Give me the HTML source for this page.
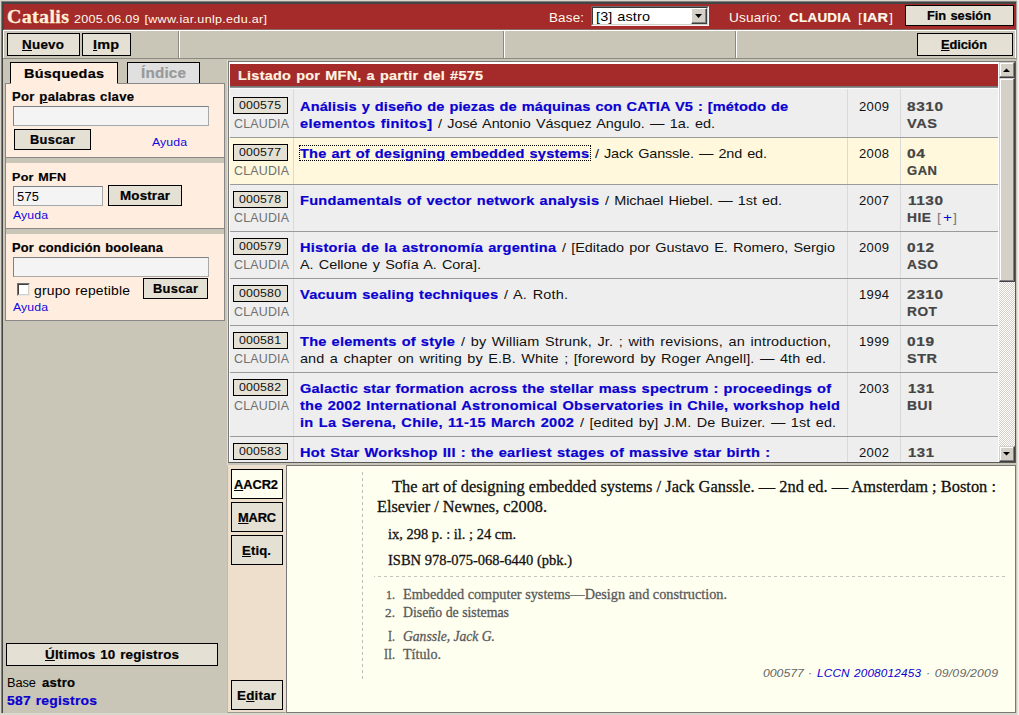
<!DOCTYPE html>
<html lang="es"><head><meta charset="utf-8"><title>Catalis</title>
<style>
html,body{margin:0;padding:0;}
body{width:1019px;height:715px;overflow:hidden;position:relative;background:#C9C6B8;font-family:'Liberation Sans', sans-serif;}
div{position:absolute;}
.t{position:absolute;white-space:pre;transform-origin:0 0;}
u{text-decoration:underline;}
</style></head><body>

<div style="left:0px;top:0px;width:1019px;height:715px;background:#C9C6B8;"></div>
<div style="left:0px;top:0px;width:1019px;height:1px;background:#DAD7CD;"></div>
<div style="left:0px;top:0px;width:1px;height:715px;background:#DAD7CD;"></div>
<div style="left:1px;top:1px;width:1018px;height:1px;background:#808080;"></div>
<div style="left:1px;top:1px;width:1px;height:713px;background:#808080;"></div>
<div style="left:2px;top:2px;width:1017px;height:2px;background:#454545;"></div>
<div style="left:2px;top:2px;width:1px;height:711px;background:#454545;"></div>
<div style="left:3px;top:2px;width:1px;height:28px;background:#454545;"></div>
<div style="left:0px;top:713px;width:1019px;height:2px;background:#DAD7CD;"></div>
<div style="left:1016px;top:1px;width:1px;height:59px;background:#A0A0A0;"></div>
<div style="left:1017px;top:0px;width:1px;height:715px;background:#E6E4DC;"></div>
<div style="left:1018px;top:0px;width:1px;height:715px;background:#F2F1EC;"></div>
<div style="left:4px;top:4px;width:1012px;height:25px;background:#A52A2A;"></div>
<div style="left:4px;top:29px;width:1012px;height:1px;background:#8a6a62;"></div>
<div style="left:591px;top:6px;width:118px;height:20px;background:#fff;border:1px solid;border-color:#6b6b6b #f4f4f4 #f4f4f4 #6b6b6b;box-sizing:border-box;"></div>
<div style="left:592px;top:7px;width:116px;height:18px;border:1px solid;border-color:#3a3a3a #d4d0c8 #d4d0c8 #3a3a3a;box-sizing:border-box;"></div>
<div style="left:691px;top:8px;width:16px;height:16px;background:#D4D0C8;border:1px solid;border-color:#fff #404040 #404040 #fff;box-sizing:border-box;box-shadow:inset -1px -1px 0 #808080;"><svg width="14" height="14" style="position:absolute;left:0;top:0"><path d="M3 5h7l-3.5 4z" fill="#000"/></svg></div>
<div style="left:905px;top:5px;width:109px;height:21px;background:#E4E0D4;border:1px solid #000;box-sizing:border-box;"></div>
<div style="left:3px;top:30px;width:1013px;height:1px;background:#fff;"></div>
<div style="left:4px;top:31px;width:1011px;height:27px;background:#C9C6B8;"></div>
<div style="left:3px;top:30px;width:1px;height:29px;background:#fff;"></div>
<div style="left:1015px;top:30px;width:1px;height:29px;background:#fff;"></div>
<div style="left:3px;top:58px;width:1013px;height:1px;background:#8a8a80;"></div>
<div style="left:178px;top:31px;width:1px;height:27px;background:#8a8a80;"></div>
<div style="left:179px;top:31px;width:1px;height:27px;background:#fff;"></div>
<div style="left:503px;top:31px;width:1px;height:27px;background:#8a8a80;"></div>
<div style="left:504px;top:31px;width:1px;height:27px;background:#fff;"></div>
<div style="left:735px;top:31px;width:1px;height:27px;background:#8a8a80;"></div>
<div style="left:736px;top:31px;width:1px;height:27px;background:#fff;"></div>
<div style="left:7px;top:33px;width:73px;height:23px;background:#E4E0D4;border:1px solid #000;box-sizing:border-box;"></div>
<div style="left:82px;top:33px;width:49px;height:23px;background:#E4E0D4;border:1px solid #000;box-sizing:border-box;"></div>
<div style="left:917px;top:33px;width:96px;height:23px;background:#E4E0D4;border:1px solid #000;box-sizing:border-box;"></div>
<div style="left:10px;top:62px;width:108px;height:22px;background:#FFEEE0;border:1px solid #000;border-bottom:none;box-sizing:border-box;"></div>
<div style="left:127px;top:62px;width:73px;height:22px;background:#E0E0E0;border:1px solid #000;box-sizing:border-box;"></div>
<div style="left:5px;top:83px;width:1px;height:238px;background:#888888;"></div>
<div style="left:224px;top:83px;width:1px;height:238px;background:#888888;"></div>
<div style="left:5px;top:83px;width:220px;height:1px;background:#888888;"></div>
<div style="left:11px;top:83px;width:106px;height:1px;background:#FFEEE0;"></div>
<div style="left:6px;top:84px;width:218px;height:73px;background:#FFEEE0;"></div>
<div style="left:5px;top:157px;width:220px;height:1px;background:#888888;"></div>
<div style="left:6px;top:163px;width:218px;height:65px;background:#FFEEE0;"></div>
<div style="left:5px;top:228px;width:220px;height:1px;background:#888888;"></div>
<div style="left:6px;top:234px;width:218px;height:86px;background:#FFEEE0;"></div>
<div style="left:5px;top:320px;width:220px;height:1px;background:#888888;"></div>
<div style="left:13px;top:106px;width:196px;height:20px;background:#F4F4F4;border:1px solid;border-color:#808080 #a8a8a8 #a8a8a8 #808080;box-sizing:border-box;"></div>
<div style="left:14px;top:129px;width:77px;height:21px;background:#E4E0D4;border:1px solid #000;box-sizing:border-box;"></div>
<div style="left:13px;top:186px;width:90px;height:20px;background:#F4F4F4;border:1px solid;border-color:#808080 #a8a8a8 #a8a8a8 #808080;box-sizing:border-box;"></div>
<div style="left:108px;top:185px;width:74px;height:21px;background:#E4E0D4;border:1px solid #000;box-sizing:border-box;"></div>
<div style="left:13px;top:257px;width:196px;height:20px;background:#F4F4F4;border:1px solid;border-color:#808080 #a8a8a8 #a8a8a8 #808080;box-sizing:border-box;"></div>
<div style="left:17px;top:283px;width:13px;height:13px;background:#fff;border:1px solid;border-color:#707070 #e8e8e8 #e8e8e8 #707070;box-sizing:border-box;"></div>
<div style="left:18px;top:284px;width:11px;height:11px;border:1px solid;border-color:#404040 #d4d0c8 #d4d0c8 #404040;box-sizing:border-box;"></div>
<div style="left:143px;top:278px;width:65px;height:21px;background:#E4E0D4;border:1px solid #000;box-sizing:border-box;"></div>
<div style="left:6px;top:643px;width:212px;height:23px;background:#E4E0D4;border:1px solid #000;box-sizing:border-box;"></div>
<div style="left:227px;top:60px;width:1px;height:653px;background:#E2E0D6;"></div>
<div style="left:228px;top:61px;width:788px;height:402px;background:#fff;border:1px solid;border-color:#787878 #5a5a5a #5a5a5a #787878;box-sizing:border-box;"></div>
<div style="left:230px;top:64px;width:768px;height:398px;background:#EEEEEE;"></div>
<div style="left:230px;top:64px;width:768px;height:22px;background:#A52A2A;"></div>
<div style="left:230px;top:86px;width:768px;height:1px;background:#747878;"></div>
<div style="left:230px;top:87px;width:768px;height:1px;background:#8e9292;"></div>
<div style="left:230px;top:88px;width:768px;height:1px;background:#FCFCFC;"></div>
<div style="left:230px;top:137px;width:768px;height:1px;background:#9a9a9a;"></div>
<div style="left:293px;top:89px;width:1px;height:48px;background:#DADADA;"></div>
<div style="left:847px;top:89px;width:1px;height:48px;background:#DADADA;"></div>
<div style="left:900px;top:89px;width:1px;height:48px;background:#DADADA;"></div>
<div style="left:233px;top:97px;width:55px;height:17px;background:#E4E0D4;border:1px solid #000;box-sizing:border-box;"></div>
<div style="left:230px;top:138px;width:768px;height:46px;background:#FFF8DC;"></div>
<div style="left:230px;top:184px;width:768px;height:1px;background:#9a9a9a;"></div>
<div style="left:293px;top:138px;width:1px;height:46px;background:#DADADA;"></div>
<div style="left:847px;top:138px;width:1px;height:46px;background:#DADADA;"></div>
<div style="left:900px;top:138px;width:1px;height:46px;background:#DADADA;"></div>
<div style="left:233px;top:144px;width:55px;height:17px;background:#E4E0D4;border:1px solid #000;box-sizing:border-box;"></div>
<div style="left:230px;top:231px;width:768px;height:1px;background:#9a9a9a;"></div>
<div style="left:293px;top:185px;width:1px;height:46px;background:#DADADA;"></div>
<div style="left:847px;top:185px;width:1px;height:46px;background:#DADADA;"></div>
<div style="left:900px;top:185px;width:1px;height:46px;background:#DADADA;"></div>
<div style="left:233px;top:191px;width:55px;height:17px;background:#E4E0D4;border:1px solid #000;box-sizing:border-box;"></div>
<div style="left:230px;top:278px;width:768px;height:1px;background:#9a9a9a;"></div>
<div style="left:293px;top:232px;width:1px;height:46px;background:#DADADA;"></div>
<div style="left:847px;top:232px;width:1px;height:46px;background:#DADADA;"></div>
<div style="left:900px;top:232px;width:1px;height:46px;background:#DADADA;"></div>
<div style="left:233px;top:238px;width:55px;height:17px;background:#E4E0D4;border:1px solid #000;box-sizing:border-box;"></div>
<div style="left:230px;top:325px;width:768px;height:1px;background:#9a9a9a;"></div>
<div style="left:293px;top:279px;width:1px;height:46px;background:#DADADA;"></div>
<div style="left:847px;top:279px;width:1px;height:46px;background:#DADADA;"></div>
<div style="left:900px;top:279px;width:1px;height:46px;background:#DADADA;"></div>
<div style="left:233px;top:285px;width:55px;height:17px;background:#E4E0D4;border:1px solid #000;box-sizing:border-box;"></div>
<div style="left:230px;top:372px;width:768px;height:1px;background:#9a9a9a;"></div>
<div style="left:293px;top:326px;width:1px;height:46px;background:#DADADA;"></div>
<div style="left:847px;top:326px;width:1px;height:46px;background:#DADADA;"></div>
<div style="left:900px;top:326px;width:1px;height:46px;background:#DADADA;"></div>
<div style="left:233px;top:332px;width:55px;height:17px;background:#E4E0D4;border:1px solid #000;box-sizing:border-box;"></div>
<div style="left:230px;top:436px;width:768px;height:1px;background:#9a9a9a;"></div>
<div style="left:293px;top:373px;width:1px;height:63px;background:#DADADA;"></div>
<div style="left:847px;top:373px;width:1px;height:63px;background:#DADADA;"></div>
<div style="left:900px;top:373px;width:1px;height:63px;background:#DADADA;"></div>
<div style="left:233px;top:379px;width:55px;height:17px;background:#E4E0D4;border:1px solid #000;box-sizing:border-box;"></div>
<div style="left:293px;top:437px;width:1px;height:25px;background:#DADADA;"></div>
<div style="left:847px;top:437px;width:1px;height:25px;background:#DADADA;"></div>
<div style="left:900px;top:437px;width:1px;height:25px;background:#DADADA;"></div>
<div style="left:233px;top:443px;width:55px;height:17px;background:#E4E0D4;border:1px solid #000;box-sizing:border-box;"></div>
<div style="left:299px;top:145px;width:292px;height:16px;border:1px dotted #000;box-sizing:border-box;"></div>
<div style="left:999px;top:62px;width:16px;height:400px;background:repeating-conic-gradient(#fff 0% 25%,#D4D0C8 0% 50%) 0 0/2px 2px;"></div>
<div style="left:999px;top:62px;width:16px;height:16px;background:#D4D0C8;border:1px solid;border-color:#D4D0C8 #404040 #404040 #D4D0C8;box-sizing:border-box;box-shadow:inset -1px -1px 0 #808080,inset 1px 1px 0 #fff;"><svg width="14" height="14" style="position:absolute;left:0;top:0"><path d="M3 9h7l-3.5 -3.5z" fill="#000"/></svg></div>
<div style="left:999px;top:78px;width:16px;height:204px;background:#D4D0C8;border:1px solid;border-color:#D4D0C8 #404040 #404040 #D4D0C8;box-sizing:border-box;box-shadow:inset -1px -1px 0 #808080,inset 1px 1px 0 #fff;"></div>
<div style="left:999px;top:446px;width:16px;height:16px;background:#D4D0C8;border:1px solid;border-color:#D4D0C8 #404040 #404040 #D4D0C8;box-sizing:border-box;box-shadow:inset -1px -1px 0 #808080,inset 1px 1px 0 #fff;"><svg width="14" height="14" style="position:absolute;left:0;top:0"><path d="M3 5h7l-3.5 3.5z" fill="#000"/></svg></div>
<div style="left:227px;top:465px;width:59px;height:248px;background:#EEDFCC;border:1px solid;border-color:#E6E0D4 #EEDFCC #9a9a90 #BEBBB0;box-sizing:border-box;"></div>
<div style="left:286px;top:465px;width:730px;height:248px;background:#FFFFF0;border:1px solid #787878;box-sizing:border-box;"></div>
<div style="left:231px;top:469px;width:52px;height:30px;background:#FFFFF0;border:1px solid #000;box-sizing:border-box;"></div>
<div style="left:231px;top:502px;width:52px;height:30px;background:#E4E0D4;border:1px solid #000;box-sizing:border-box;"></div>
<div style="left:231px;top:535px;width:52px;height:30px;background:#E4E0D4;border:1px solid #000;box-sizing:border-box;"></div>
<div style="left:231px;top:680px;width:52px;height:30px;background:#E4E0D4;border:1px solid #000;box-sizing:border-box;"></div>
<div style="left:362px;top:472px;width:1px;height:207px;background:repeating-linear-gradient(to bottom,#BEBEB6 0,#BEBEB6 3px,transparent 3px,transparent 6px);"></div>
<div style="left:374px;top:576px;width:1px;height:1px;background:#C4C4BC;"></div>
<div style="left:378px;top:576px;width:628px;height:1px;background:repeating-linear-gradient(to right,#C4C4BC 0,#C4C4BC 3px,transparent 3px,transparent 6px);"></div>
<span class="t" id="t0" style="left:7px;top:6px;font:bold 18.5px/1.2 'Liberation Serif', serif;color:#FFEFD5;letter-spacing:0.300px;transform:scaleX(1.0820);-webkit-text-stroke:0.3px;">Catalis</span>
<span class="t" id="t1" style="left:74px;top:12px;font:11.75px/1.2 'Liberation Sans', sans-serif;color:#FFFAEC;letter-spacing:0.275px;transform:scaleX(1.0700);word-spacing:0.7px;">2005.06.09 [www.iar.unlp.edu.ar]</span>
<span class="t" id="t2" style="left:549px;top:11px;font:12.5px/1.2 'Liberation Sans', sans-serif;color:#FFFAEC;letter-spacing:0.185px;transform:scaleX(1.0700);">Base:</span>
<span class="t" id="t3" style="left:596px;top:9px;font:13.5px/1.2 'Liberation Sans', sans-serif;color:#000;letter-spacing:0.123px;transform:scaleX(1.0700);word-spacing:0.7px;">[3] astro</span>
<span class="t" id="t4" style="left:729px;top:10px;font:12.75px/1.2 'Liberation Sans', sans-serif;color:#FFFAEC;letter-spacing:0.159px;transform:scaleX(1.0700);">Usuario:</span>
<span class="t" id="t5" style="left:789px;top:11px;font:bold 12.5px/1.2 'Liberation Sans', sans-serif;color:#FFFAEC;letter-spacing:0.282px;transform:scaleX(1.0700);-webkit-text-stroke:0.2px;">CLAUDIA</span>
<span class="t" id="t6" style="left:858px;top:10px;font:13.5px/1.2 'Liberation Sans', sans-serif;color:#FFFAEC;transform:scaleX(1.0700);">[</span>
<span class="t" id="t7" style="left:863px;top:10px;font:bold 13.5px/1.2 'Liberation Sans', sans-serif;color:#FFFAEC;letter-spacing:0.057px;transform:scaleX(1.0700);-webkit-text-stroke:0.2px;">IAR</span>
<span class="t" id="t8" style="left:889px;top:10px;font:13.5px/1.2 'Liberation Sans', sans-serif;color:#FFFAEC;transform:scaleX(1.0700);">]</span>
<span class="t" id="t9" style="left:927px;top:9px;font:bold 12.0px/1.2 'Liberation Sans', sans-serif;color:#000;letter-spacing:-0.026px;transform:scaleX(1.0700);-webkit-text-stroke:0.2px;word-spacing:0.7px;">Fin sesión</span>
<span class="t" id="t10" style="left:22px;top:38px;font:bold 12.5px/1.2 'Liberation Sans', sans-serif;color:#000;letter-spacing:0.258px;transform:scaleX(1.0700);-webkit-text-stroke:0.2px;"><u>N</u>uevo</span>
<span class="t" id="t11" style="left:93px;top:37px;font:bold 13.5px/1.2 'Liberation Sans', sans-serif;color:#000;letter-spacing:0.142px;transform:scaleX(1.0700);-webkit-text-stroke:0.2px;"><u>I</u>mp</span>
<span class="t" id="t12" style="left:941px;top:38px;font:bold 12.0px/1.2 'Liberation Sans', sans-serif;color:#000;letter-spacing:-0.061px;transform:scaleX(1.0700);-webkit-text-stroke:0.2px;"><u>E</u>dición</span>
<span class="t" id="t13" style="left:24px;top:66px;font:bold 13.5px/1.2 'Liberation Sans', sans-serif;color:#000;letter-spacing:0.248px;transform:scaleX(1.0700);-webkit-text-stroke:0.2px;">Búsquedas</span>
<span class="t" id="t14" style="left:141px;top:65px;font:bold 14.25px/1.2 'Liberation Sans', sans-serif;color:#999;letter-spacing:0.174px;transform:scaleX(1.0700);-webkit-text-stroke:0.2px;">Índice</span>
<span class="t" id="t15" style="left:12px;top:90px;font:bold 12.25px/1.2 'Liberation Sans', sans-serif;color:#000;letter-spacing:0.255px;transform:scaleX(1.0700);-webkit-text-stroke:0.2px;word-spacing:0.7px;">Por <u>p</u>alabras clave</span>
<span class="t" id="t16" style="left:30px;top:133px;font:bold 12.0px/1.2 'Liberation Sans', sans-serif;color:#000;letter-spacing:0.274px;transform:scaleX(1.0700);-webkit-text-stroke:0.2px;">Buscar</span>
<span class="t" id="t17" style="left:152px;top:136px;font:11.5px/1.2 'Liberation Sans', sans-serif;color:#1408DC;letter-spacing:0.076px;transform:scaleX(1.0700);">Ayuda</span>
<span class="t" id="t18" style="left:12px;top:170px;font:bold 11.75px/1.2 'Liberation Sans', sans-serif;color:#000;letter-spacing:0.242px;transform:scaleX(1.0700);-webkit-text-stroke:0.2px;word-spacing:0.7px;">Por MFN</span>
<span class="t" id="t19" style="left:17px;top:190px;font:12.0px/1.2 'Liberation Sans', sans-serif;color:#000;letter-spacing:0.265px;transform:scaleX(1.0700);">575</span>
<span class="t" id="t20" style="left:120px;top:189px;font:bold 12.5px/1.2 'Liberation Sans', sans-serif;color:#000;letter-spacing:0.148px;transform:scaleX(1.0700);-webkit-text-stroke:0.2px;">Mostrar</span>
<span class="t" id="t21" style="left:13px;top:209px;font:11.5px/1.2 'Liberation Sans', sans-serif;color:#1408DC;letter-spacing:0.076px;transform:scaleX(1.0700);">Ayuda</span>
<span class="t" id="t22" style="left:12px;top:241px;font:bold 12.0px/1.2 'Liberation Sans', sans-serif;color:#000;letter-spacing:0.176px;transform:scaleX(1.0700);-webkit-text-stroke:0.2px;word-spacing:0.7px;">Por condición booleana</span>
<span class="t" id="t23" style="left:34px;top:283px;font:13.0px/1.2 'Liberation Sans', sans-serif;color:#000;letter-spacing:0.163px;transform:scaleX(1.0700);word-spacing:0.7px;">grupo repetible</span>
<span class="t" id="t24" style="left:153px;top:282px;font:bold 12.0px/1.2 'Liberation Sans', sans-serif;color:#000;letter-spacing:0.274px;transform:scaleX(1.0700);-webkit-text-stroke:0.2px;">Buscar</span>
<span class="t" id="t25" style="left:13px;top:301px;font:11.5px/1.2 'Liberation Sans', sans-serif;color:#1408DC;letter-spacing:0.076px;transform:scaleX(1.0700);">Ayuda</span>
<span class="t" id="t26" style="left:45px;top:648px;font:bold 12.5px/1.2 'Liberation Sans', sans-serif;color:#000;letter-spacing:0.192px;transform:scaleX(1.0700);-webkit-text-stroke:0.2px;word-spacing:0.7px;"><u>Ú</u>ltimos 10 registros</span>
<span class="t" id="t27" style="left:7px;top:676px;font:12.0px/1.2 'Liberation Sans', sans-serif;color:#000;letter-spacing:-0.086px;transform:scaleX(1.0700);">Base</span>
<span class="t" id="t28" style="left:42px;top:676px;font:bold 12.25px/1.2 'Liberation Sans', sans-serif;color:#000;letter-spacing:0.218px;transform:scaleX(1.0700);-webkit-text-stroke:0.2px;">astro</span>
<span class="t" id="t29" style="left:7px;top:693px;font:bold 13.0px/1.2 'Liberation Sans', sans-serif;color:#0A00D0;letter-spacing:0.206px;transform:scaleX(1.0700);-webkit-text-stroke:0.2px;word-spacing:0.7px;">587 registros</span>
<span class="t" id="t30" style="left:238px;top:68px;font:bold 13.5px/1.2 'Liberation Sans', sans-serif;color:#FFF4E2;letter-spacing:0.242px;transform:scaleX(1.0700);-webkit-text-stroke:0.2px;word-spacing:0.7px;">Listado por MFN, a partir del #575</span>
<span class="t" id="t31" style="left:239px;top:99px;font:11.5px/1.2 'Liberation Sans', sans-serif;color:#111;letter-spacing:0.175px;transform:scaleX(1.0700);">000575</span>
<span class="t" id="t32" style="left:234px;top:117px;font:12.5px/1.2 'Liberation Sans', sans-serif;color:#707070;letter-spacing:0.200px;transform:scaleX(0.9930);">CLAUDIA</span>
<span class="t" id="t33" style="left:859px;top:99px;font:13px/1.2 'Liberation Sans', sans-serif;color:#111;letter-spacing:0.300px;transform:scaleX(1.0060);">2009</span>
<span class="t" id="t34" style="left:907px;top:99px;font:bold 12.75px/1.2 'Liberation Sans', sans-serif;color:#444;letter-spacing:0.500px;transform:scaleX(1.2050);-webkit-text-stroke:0.2px;">8310</span>
<span class="t" id="t35" style="left:907px;top:116px;font:bold 12.75px/1.2 'Liberation Sans', sans-serif;color:#444;letter-spacing:0.500px;transform:scaleX(1.1415);-webkit-text-stroke:0.2px;">VAS</span>
<span class="t" id="t36" style="left:239px;top:146px;font:11.5px/1.2 'Liberation Sans', sans-serif;color:#111;letter-spacing:0.175px;transform:scaleX(1.0700);">000577</span>
<span class="t" id="t37" style="left:234px;top:164px;font:12.5px/1.2 'Liberation Sans', sans-serif;color:#707070;letter-spacing:0.200px;transform:scaleX(0.9930);">CLAUDIA</span>
<span class="t" id="t38" style="left:859px;top:146px;font:13px/1.2 'Liberation Sans', sans-serif;color:#111;letter-spacing:0.300px;transform:scaleX(1.0060);">2008</span>
<span class="t" id="t39" style="left:907px;top:146px;font:bold 12.75px/1.2 'Liberation Sans', sans-serif;color:#444;letter-spacing:0.500px;transform:scaleX(1.2255);-webkit-text-stroke:0.2px;">04</span>
<span class="t" id="t40" style="left:907px;top:163px;font:bold 12.75px/1.2 'Liberation Sans', sans-serif;color:#444;letter-spacing:0.500px;transform:scaleX(1.0224);-webkit-text-stroke:0.2px;">GAN</span>
<span class="t" id="t41" style="left:239px;top:193px;font:11.5px/1.2 'Liberation Sans', sans-serif;color:#111;letter-spacing:0.175px;transform:scaleX(1.0700);">000578</span>
<span class="t" id="t42" style="left:234px;top:211px;font:12.5px/1.2 'Liberation Sans', sans-serif;color:#707070;letter-spacing:0.200px;transform:scaleX(0.9930);">CLAUDIA</span>
<span class="t" id="t43" style="left:859px;top:193px;font:13px/1.2 'Liberation Sans', sans-serif;color:#111;letter-spacing:0.300px;transform:scaleX(1.0060);">2007</span>
<span class="t" id="t44" style="left:908px;top:193px;font:bold 12.75px/1.2 'Liberation Sans', sans-serif;color:#444;letter-spacing:0.500px;transform:scaleX(1.1998);-webkit-text-stroke:0.2px;">1130</span>
<span class="t" id="t45" style="left:907px;top:210px;font:bold 12.75px/1.2 'Liberation Sans', sans-serif;color:#444;letter-spacing:0.500px;transform:scaleX(1.0779);-webkit-text-stroke:0.2px;">HIE</span>
<span class="t" id="t46" style="left:239px;top:240px;font:11.5px/1.2 'Liberation Sans', sans-serif;color:#111;letter-spacing:0.175px;transform:scaleX(1.0700);">000579</span>
<span class="t" id="t47" style="left:234px;top:258px;font:12.5px/1.2 'Liberation Sans', sans-serif;color:#707070;letter-spacing:0.200px;transform:scaleX(0.9930);">CLAUDIA</span>
<span class="t" id="t48" style="left:859px;top:240px;font:13px/1.2 'Liberation Sans', sans-serif;color:#111;letter-spacing:0.300px;transform:scaleX(1.0060);">2009</span>
<span class="t" id="t49" style="left:907px;top:240px;font:bold 12.75px/1.2 'Liberation Sans', sans-serif;color:#444;letter-spacing:0.500px;transform:scaleX(1.2118);-webkit-text-stroke:0.2px;">012</span>
<span class="t" id="t50" style="left:907px;top:257px;font:bold 12.75px/1.2 'Liberation Sans', sans-serif;color:#444;letter-spacing:0.500px;transform:scaleX(1.0824);-webkit-text-stroke:0.2px;">ASO</span>
<span class="t" id="t51" style="left:239px;top:287px;font:11.5px/1.2 'Liberation Sans', sans-serif;color:#111;letter-spacing:0.175px;transform:scaleX(1.0700);">000580</span>
<span class="t" id="t52" style="left:234px;top:305px;font:12.5px/1.2 'Liberation Sans', sans-serif;color:#707070;letter-spacing:0.200px;transform:scaleX(0.9930);">CLAUDIA</span>
<span class="t" id="t53" style="left:859px;top:287px;font:13px/1.2 'Liberation Sans', sans-serif;color:#111;letter-spacing:0.300px;transform:scaleX(1.0060);">1994</span>
<span class="t" id="t54" style="left:907px;top:287px;font:bold 12.75px/1.2 'Liberation Sans', sans-serif;color:#444;letter-spacing:0.500px;transform:scaleX(1.2050);-webkit-text-stroke:0.2px;">2310</span>
<span class="t" id="t55" style="left:907px;top:304px;font:bold 12.75px/1.2 'Liberation Sans', sans-serif;color:#444;letter-spacing:0.500px;transform:scaleX(1.0744);-webkit-text-stroke:0.2px;">ROT</span>
<span class="t" id="t56" style="left:239px;top:334px;font:11.5px/1.2 'Liberation Sans', sans-serif;color:#111;letter-spacing:0.175px;transform:scaleX(1.0700);">000581</span>
<span class="t" id="t57" style="left:234px;top:352px;font:12.5px/1.2 'Liberation Sans', sans-serif;color:#707070;letter-spacing:0.200px;transform:scaleX(0.9930);">CLAUDIA</span>
<span class="t" id="t58" style="left:859px;top:334px;font:13px/1.2 'Liberation Sans', sans-serif;color:#111;letter-spacing:0.300px;transform:scaleX(1.0060);">1999</span>
<span class="t" id="t59" style="left:907px;top:334px;font:bold 12.75px/1.2 'Liberation Sans', sans-serif;color:#444;letter-spacing:0.500px;transform:scaleX(1.2118);-webkit-text-stroke:0.2px;">019</span>
<span class="t" id="t60" style="left:907px;top:351px;font:bold 12.75px/1.2 'Liberation Sans', sans-serif;color:#444;letter-spacing:0.500px;transform:scaleX(1.1321);-webkit-text-stroke:0.2px;">STR</span>
<span class="t" id="t61" style="left:239px;top:381px;font:11.5px/1.2 'Liberation Sans', sans-serif;color:#111;letter-spacing:0.175px;transform:scaleX(1.0700);">000582</span>
<span class="t" id="t62" style="left:234px;top:399px;font:12.5px/1.2 'Liberation Sans', sans-serif;color:#707070;letter-spacing:0.200px;transform:scaleX(0.9930);">CLAUDIA</span>
<span class="t" id="t63" style="left:859px;top:381px;font:13px/1.2 'Liberation Sans', sans-serif;color:#111;letter-spacing:0.300px;transform:scaleX(1.0060);">2003</span>
<span class="t" id="t64" style="left:908px;top:381px;font:bold 12.75px/1.2 'Liberation Sans', sans-serif;color:#444;letter-spacing:0.500px;transform:scaleX(1.1669);-webkit-text-stroke:0.2px;">131</span>
<span class="t" id="t65" style="left:907px;top:398px;font:bold 12.75px/1.2 'Liberation Sans', sans-serif;color:#444;letter-spacing:0.500px;transform:scaleX(1.0884);-webkit-text-stroke:0.2px;">BUI</span>
<span class="t" id="t66" style="left:239px;top:445px;font:11.5px/1.2 'Liberation Sans', sans-serif;color:#111;letter-spacing:0.175px;transform:scaleX(1.0700);">000583</span>
<span class="t" id="t67" style="left:859px;top:445px;font:13px/1.2 'Liberation Sans', sans-serif;color:#111;letter-spacing:0.300px;transform:scaleX(1.0060);">2002</span>
<span class="t" id="t68" style="left:908px;top:445px;font:bold 12.75px/1.2 'Liberation Sans', sans-serif;color:#444;letter-spacing:0.500px;transform:scaleX(1.1669);-webkit-text-stroke:0.2px;">131</span>
<span class="t" id="t69" style="left:300px;top:99px;font:bold 13.25px/1.2 'Liberation Sans', sans-serif;color:#0A00D0;letter-spacing:0.094px;transform:scaleX(1.1000);-webkit-text-stroke:0.2px;word-spacing:0.7px;">Análisis y diseño de piezas de máquinas con CATIA V5 : [método de</span>
<span class="t" id="t70" style="left:300px;top:116px;font:bold 13.25px/1.2 'Liberation Sans', sans-serif;color:#0A00D0;letter-spacing:0.348px;transform:scaleX(1.1000);-webkit-text-stroke:0.2px;word-spacing:0.7px;">elementos finitos]</span>
<span class="t" id="t71" style="left:438px;top:116px;font:13.5px/1.2 'Liberation Sans', sans-serif;color:#111;letter-spacing:-0.062px;transform:scaleX(1.0700);word-spacing:1.3px;">/ José Antonio Vásquez Angulo. — 1a. ed.</span>
<span class="t" id="t72" style="left:300px;top:146px;font:bold 13.25px/1.2 'Liberation Sans', sans-serif;color:#0A00D0;letter-spacing:0.165px;transform:scaleX(1.1000);-webkit-text-stroke:0.2px;word-spacing:0.7px;">The art of designing embedded systems</span>
<span class="t" id="t73" style="left:595px;top:146px;font:13.5px/1.2 'Liberation Sans', sans-serif;color:#111;letter-spacing:-0.171px;transform:scaleX(1.0700);word-spacing:1.3px;">/ Jack Ganssle. — 2nd ed.</span>
<span class="t" id="t74" style="left:300px;top:193px;font:bold 13.25px/1.2 'Liberation Sans', sans-serif;color:#0A00D0;letter-spacing:0.239px;transform:scaleX(1.1000);-webkit-text-stroke:0.2px;word-spacing:0.7px;">Fundamentals of vector network analysis</span>
<span class="t" id="t75" style="left:605px;top:193px;font:13.5px/1.2 'Liberation Sans', sans-serif;color:#111;letter-spacing:-0.093px;transform:scaleX(1.0700);word-spacing:1.3px;">/ Michael Hiebel. — 1st ed.</span>
<span class="t" id="t76" style="left:300px;top:240px;font:bold 13.25px/1.2 'Liberation Sans', sans-serif;color:#0A00D0;letter-spacing:0.244px;transform:scaleX(1.1000);-webkit-text-stroke:0.2px;word-spacing:0.7px;">Historia de la astronomía argentina</span>
<span class="t" id="t77" style="left:562px;top:240px;font:13.5px/1.2 'Liberation Sans', sans-serif;color:#111;letter-spacing:-0.046px;transform:scaleX(1.0700);word-spacing:1.3px;">/ [Editado por Gustavo E. Romero, Sergio</span>
<span class="t" id="t78" style="left:300px;top:257px;font:13.5px/1.2 'Liberation Sans', sans-serif;color:#111;letter-spacing:-0.062px;transform:scaleX(1.0700);word-spacing:1.3px;">A. Cellone y Sofía A. Cora].</span>
<span class="t" id="t79" style="left:300px;top:287px;font:bold 13.25px/1.2 'Liberation Sans', sans-serif;color:#0A00D0;letter-spacing:0.201px;transform:scaleX(1.1000);-webkit-text-stroke:0.2px;word-spacing:0.7px;">Vacuum sealing techniques</span>
<span class="t" id="t80" style="left:504px;top:287px;font:13.5px/1.2 'Liberation Sans', sans-serif;color:#111;letter-spacing:0.186px;transform:scaleX(1.0700);word-spacing:1.3px;">/ A. Roth.</span>
<span class="t" id="t81" style="left:300px;top:334px;font:bold 13.25px/1.2 'Liberation Sans', sans-serif;color:#0A00D0;letter-spacing:0.202px;transform:scaleX(1.1000);-webkit-text-stroke:0.2px;word-spacing:0.7px;">The elements of style</span>
<span class="t" id="t82" style="left:461px;top:334px;font:13.5px/1.2 'Liberation Sans', sans-serif;color:#111;letter-spacing:0.146px;transform:scaleX(1.0700);word-spacing:1.3px;">/ by William Strunk, Jr. ; with revisions, an introduction,</span>
<span class="t" id="t83" style="left:300px;top:351px;font:13.5px/1.2 'Liberation Sans', sans-serif;color:#111;letter-spacing:0.079px;transform:scaleX(1.0700);word-spacing:1.3px;">and a chapter on writing by E.B. White ; [foreword by Roger Angell]. — 4th ed.</span>
<span class="t" id="t84" style="left:300px;top:381px;font:bold 13.25px/1.2 'Liberation Sans', sans-serif;color:#0A00D0;letter-spacing:0.154px;transform:scaleX(1.1000);-webkit-text-stroke:0.2px;word-spacing:0.7px;">Galactic star formation across the stellar mass spectrum : proceedings of</span>
<span class="t" id="t85" style="left:300px;top:398px;font:bold 13.25px/1.2 'Liberation Sans', sans-serif;color:#0A00D0;letter-spacing:0.223px;transform:scaleX(1.1000);-webkit-text-stroke:0.2px;word-spacing:0.7px;">the 2002 International Astronomical Observatories in Chile, workshop held</span>
<span class="t" id="t86" style="left:300px;top:415px;font:bold 13.25px/1.2 'Liberation Sans', sans-serif;color:#0A00D0;letter-spacing:0.276px;transform:scaleX(1.1000);-webkit-text-stroke:0.2px;word-spacing:0.7px;">in La Serena, Chile, 11-15 March 2002</span>
<span class="t" id="t87" style="left:580px;top:415px;font:13.5px/1.2 'Liberation Sans', sans-serif;color:#111;letter-spacing:0.059px;transform:scaleX(1.0700);word-spacing:1.3px;">/ [edited by] J.M. De Buizer. — 1st ed.</span>
<span class="t" id="t88" style="left:300px;top:445px;font:bold 13.25px/1.2 'Liberation Sans', sans-serif;color:#0A00D0;letter-spacing:0.237px;transform:scaleX(1.1000);-webkit-text-stroke:0.2px;word-spacing:0.7px;">Hot Star Workshop III : the earliest stages of massive star birth :</span>
<span class="t" id="t89" style="left:937px;top:210px;font:13.5px/1.2 'Liberation Sans', sans-serif;color:#777;transform:scaleX(1.0622);">[</span>
<span class="t" id="t90" style="left:943px;top:210px;font:13.5px/1.2 'Liberation Sans', sans-serif;color:#0A00D0;transform:scaleX(1.1406);">+</span>
<span class="t" id="t91" style="left:953px;top:210px;font:13.5px/1.2 'Liberation Sans', sans-serif;color:#777;transform:scaleX(1.0622);">]</span>
<span class="t" id="t92" style="left:234px;top:478px;font:bold 12.0px/1.2 'Liberation Sans', sans-serif;color:#000;letter-spacing:-0.056px;transform:scaleX(1.0700);-webkit-text-stroke:0.2px;"><u>A</u>ACR2</span>
<span class="t" id="t93" style="left:238px;top:511px;font:bold 12.0px/1.2 'Liberation Sans', sans-serif;color:#000;letter-spacing:-0.162px;transform:scaleX(1.0700);-webkit-text-stroke:0.2px;"><u>M</u>ARC</span>
<span class="t" id="t94" style="left:242px;top:544px;font:bold 12.25px/1.2 'Liberation Sans', sans-serif;color:#000;letter-spacing:0.139px;transform:scaleX(1.0700);-webkit-text-stroke:0.2px;"><u>E</u>tiq.</span>
<span class="t" id="t95" style="left:237px;top:689px;font:bold 12.5px/1.2 'Liberation Sans', sans-serif;color:#000;letter-spacing:0.202px;transform:scaleX(1.0700);-webkit-text-stroke:0.2px;">E<u>d</u>itar</span>
<span class="t" id="t96" style="left:392px;top:477px;font:17px/1.2 'Liberation Serif', serif;color:#111;transform:scaleX(0.9662);-webkit-text-stroke:0.3px;">The art of designing embedded systems / Jack Ganssle. — 2nd ed. — Amsterdam ; Boston :</span>
<span class="t" id="t97" style="left:377px;top:497px;font:17px/1.2 'Liberation Serif', serif;color:#111;transform:scaleX(0.9551);-webkit-text-stroke:0.3px;">Elsevier / Newnes, c2008.</span>
<span class="t" id="t98" style="left:388px;top:525px;font:15px/1.2 'Liberation Serif', serif;color:#111;transform:scaleX(0.9630);-webkit-text-stroke:0.3px;">ix, 298 p. : il. ; 24 cm.</span>
<span class="t" id="t99" style="left:388px;top:551px;font:15px/1.2 'Liberation Serif', serif;color:#111;transform:scaleX(0.9664);-webkit-text-stroke:0.3px;">ISBN 978-075-068-6440 (pbk.)</span>
<span class="t" id="t100" style="left:386px;top:587px;font:13px/1.2 'Liberation Serif', serif;color:#5a5a5a;transform:scaleX(0.9231);-webkit-text-stroke:0.3px;">1.</span>
<span class="t" id="t101" style="left:403px;top:586px;font:14.5px/1.2 'Liberation Serif', serif;color:#5a5a5a;transform:scaleX(0.9848);-webkit-text-stroke:0.3px;">Embedded computer systems—Design and construction.</span>
<span class="t" id="t102" style="left:385px;top:605px;font:13px/1.2 'Liberation Serif', serif;color:#5a5a5a;transform:scaleX(1.0256);-webkit-text-stroke:0.3px;">2.</span>
<span class="t" id="t103" style="left:403px;top:604px;font:14.5px/1.2 'Liberation Serif', serif;color:#5a5a5a;transform:scaleX(0.9536);-webkit-text-stroke:0.3px;">Diseño de sistemas</span>
<span class="t" id="t104" style="left:388px;top:629px;font:14px/1.2 'Liberation Serif', serif;color:#5a5a5a;transform:scaleX(0.8566);-webkit-text-stroke:0.3px;">I.</span>
<span class="t" id="t105" style="left:403px;top:628px;font:italic 14.5px/1.2 'Liberation Serif', serif;color:#5a5a5a;transform:scaleX(0.9362);-webkit-text-stroke:0.3px;">Ganssle, Jack G.</span>
<span class="t" id="t106" style="left:384px;top:647px;font:14px/1.2 'Liberation Serif', serif;color:#5a5a5a;transform:scaleX(0.8575);-webkit-text-stroke:0.3px;">II.</span>
<span class="t" id="t107" style="left:403px;top:646px;font:14.5px/1.2 'Liberation Serif', serif;color:#5a5a5a;transform:scaleX(0.9724);-webkit-text-stroke:0.3px;">Título.</span>
<span class="t" id="t108" style="left:763px;top:667px;font:italic 11.5px/1.2 'Liberation Sans', sans-serif;color:#666;letter-spacing:-0.045px;transform:scaleX(1.0700);word-spacing:0.7px;">000577 ·</span>
<span class="t" id="t109" style="left:817px;top:667px;font:italic 11.0px/1.2 'Liberation Sans', sans-serif;color:#0A00D0;letter-spacing:0.165px;transform:scaleX(1.0700);word-spacing:0.7px;">LCCN 2008012453</span>
<span class="t" id="t110" style="left:926px;top:667px;font:italic 11.5px/1.2 'Liberation Sans', sans-serif;color:#666;letter-spacing:0.183px;transform:scaleX(1.0700);word-spacing:0.7px;">· 09/09/2009</span>
</body></html>
